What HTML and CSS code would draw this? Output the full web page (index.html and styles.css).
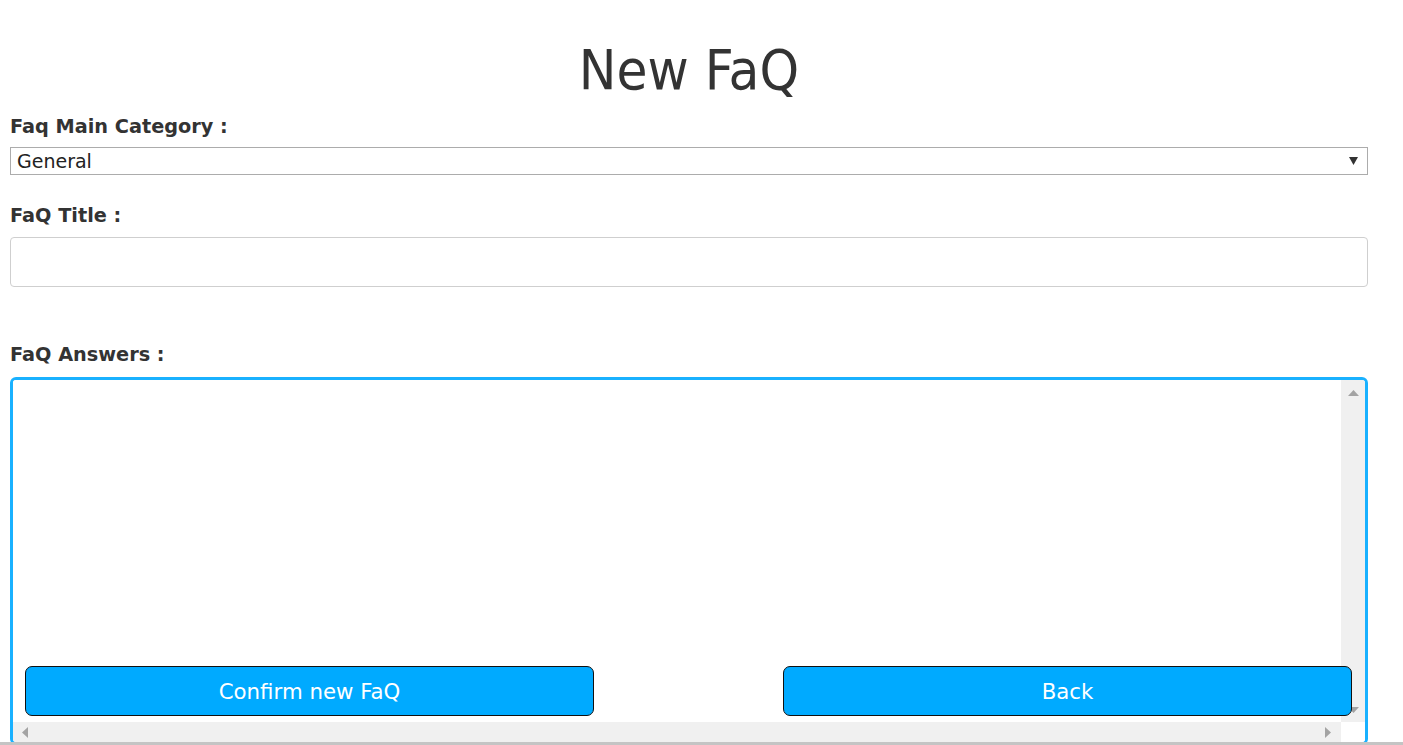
FILE: index.html
```html
<!DOCTYPE html>
<html lang="en">
<head>
<meta charset="utf-8">
<title>New FaQ</title>
<link rel="stylesheet" href="styles.css">
</head>
<body>
<main class="page">
  <h1 class="title">New FaQ</h1>
  <form class="faq-form">
    <label class="label label-cat" for="cat">Faq Main Category :</label>
    <div class="select-wrap">
      <select id="cat" class="select">
        <option>General</option>
      </select>
      <svg class="caret" width="9" height="8" viewBox="0 0 9 8"><path d="M0 0H9L4.5 8Z" fill="#333"/></svg>
    </div>

    <label class="label label-title" for="title">FaQ Title :</label>
    <input id="title" class="text-input" type="text">

    <label class="label label-answers">FaQ Answers :</label>
    <div class="answer">
      <div class="area">
        <div class="area-body"></div>
        <div class="vscroll">
          <svg class="arrow-up" width="11" height="6" viewBox="0 0 11 6"><path d="M5.5 0L11 6H0Z" fill="#a3a3a3"/></svg>
          <svg class="arrow-down" width="11" height="6" viewBox="0 0 11 6"><path d="M0 0H11L5.5 6Z" fill="#a3a3a3"/></svg>
        </div>
        <div class="hscroll">
          <svg width="6" height="11" viewBox="0 0 6 11"><path d="M6 0V11L0 5.5Z" fill="#a3a3a3"/></svg>
          <svg width="6" height="11" viewBox="0 0 6 11"><path d="M0 0L6 5.5L0 11Z" fill="#a3a3a3"/></svg>
        </div>
        <div class="corner"></div>
      </div>
      <div class="actions">
        <button type="button" class="btn">Confirm new FaQ</button>
        <button type="button" class="btn">Back</button>
      </div>
    </div>
  </form>
</main>
<div class="window-edge"></div>
</body>
</html>
```

FILE: styles.css
```css
html, body {
  margin: 0;
  padding: 0;
  background: #fff;
  overflow: hidden;
}

body {
  font-family: "DejaVu Sans", Verdana, sans-serif;
  color: #333;
  height: 745px;
}

.page {
  width: 1358px;
  margin-left: 10px;
}

.title {
  margin: 43px 0 0;
  font-family: "DejaVu Sans Condensed", "DejaVu Sans", sans-serif;
  font-stretch: condensed;
  font-weight: normal;
  font-size: 56px;
  line-height: 54px;
  text-align: center;
  color: #333;
}

.faq-form {
  display: flex;
  flex-direction: column;
}

.label {
  display: block;
  font-weight: bold;
  font-size: 19.3px;
  line-height: 24px;
  color: #333;
}

.label-cat { margin-top: 18px; }
.label-title { margin-top: 29px; }
.label-answers { margin-top: 56px; }

.select-wrap {
  margin-top: 8px;
  display: grid;
  align-items: center;
}

.select {
  grid-area: 1 / 1;
  appearance: none;
  -webkit-appearance: none;
  height: 28px;
  margin: 0;
  padding: 0 0 0 6px;
  border: 1px solid #acacac;
  border-radius: 0;
  background: #fff;
  font-family: "DejaVu Sans", Verdana, sans-serif;
  font-size: 19px;
  color: #222;
  width: 1358px;
}

.caret {
  grid-area: 1 / 1;
  justify-self: end;
  margin-right: 10px;
  pointer-events: none;
}

.text-input {
  margin-top: 9px;
  height: 50px;
  box-sizing: border-box;
  width: 1358px;
  border: 1px solid #cfcfcf;
  border-radius: 4px;
  padding: 0 10px;
  font-size: 19.2px;
  background: #fff;
}

.answer {
  margin-top: 10px;
  display: grid;
}

.area {
  grid-area: 1 / 1;
  box-sizing: border-box;
  height: 368px;
  border: 3px solid #19b1ff;
  border-radius: 6px;
  display: grid;
  grid-template-columns: 1fr 24px;
  grid-template-rows: 1fr 20px;
  overflow: hidden;
}

.area-body {
  background: #fff;
}

.vscroll {
  background: #f0f0f0;
  display: flex;
  flex-direction: column;
  align-items: center;
  justify-content: space-between;
  padding: 10px 0 9px;
}

.hscroll {
  background: #f0f0f0;
  display: flex;
  align-items: center;
  justify-content: space-between;
  padding: 0 10px 0 9px;
}

.corner {
  background: #fff;
}

.actions {
  grid-area: 1 / 1;
  align-self: start;
  margin-top: 289px;
  padding: 0 16px 0 15px;
  display: flex;
  justify-content: space-between;
}

.btn {
  width: 569px;
  height: 50px;
  margin: 0;
  border: 1px solid #111;
  border-radius: 7px;
  background: #00aaff;
  color: #fff;
  font-family: "DejaVu Sans", Verdana, sans-serif;
  font-size: 21.3px;
  padding: 0;
}

.window-edge {
  position: fixed;
  left: 0;
  right: 0;
  bottom: 0;
  height: 3px;
  background: #c4c4c4;
}
```
